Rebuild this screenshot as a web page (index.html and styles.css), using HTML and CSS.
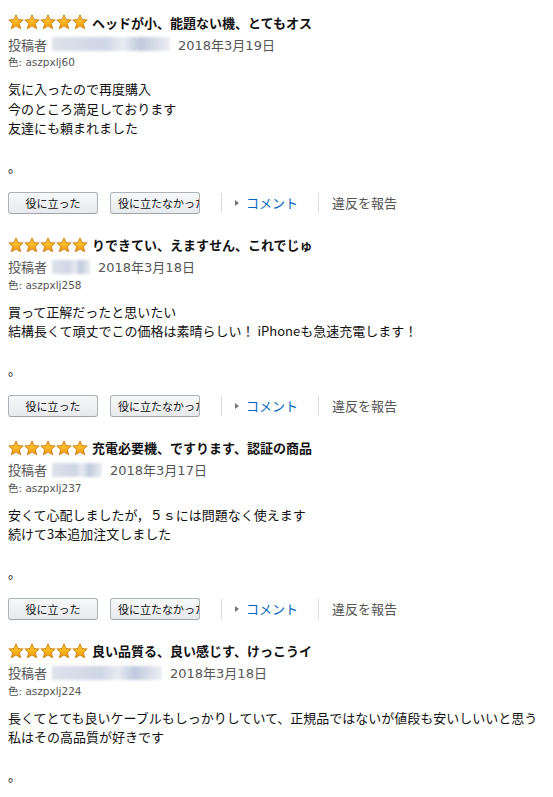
FILE: index.html
```html
<!DOCTYPE html>
<html lang="ja">
<head>
  <meta charset="UTF-8" />
  <title>カスタマーレビュー</title>
  <link rel="stylesheet" href="styles.css">
</head>
<body>
  <svg width="0" height="0" style="position:absolute">
    <defs>
      <linearGradient id="gold" x1="0" y1="0" x2="0" y2="1">
        <stop offset="0" stop-color="#ffd23c"/>
        <stop offset="1" stop-color="#f49b0b"/>
      </linearGradient>
      <symbol id="star" viewBox="0 0 16 16">
        <polygon points="8,0.9 10,5.6 15.2,6 11.3,9.5 12.6,14.7 8,11.9 3.4,14.7 4.7,9.5 0.8,6 6,5.6" fill="url(#gold)" stroke="#c97a0c" stroke-width="0.9" stroke-linejoin="round"/>
      </symbol>
    </defs>
  </svg>

  <div class="review">
    <div class="review-title">
      <span class="stars"><svg><use href="#star"/></svg><svg><use href="#star"/></svg><svg><use href="#star"/></svg><svg><use href="#star"/></svg><svg><use href="#star"/></svg></span>
      <span>ヘッドが小、能題ない機、とてもオス</span>
    </div>
    <div class="author">投稿者<span class="blur" style="width:118px"></span>2018年3月19日</div>
    <div class="variant">色: aszpxlj60</div>
    <div class="body">気に入ったので再度購入<br>今のところ満足しております<br>友達にも頼まれました<br><br>。</div>
    <div class="actions">
      <span class="btn">役に立った</span>
      <span class="btn btn-left">役に立たなかった</span>
      <span class="sep"></span>
      <span class="comment"><i class="arrow"></i>コメント</span>
      <span class="sep"></span>
      <span class="report">違反を報告</span>
    </div>
  </div>

  <div class="review">
    <div class="review-title">
      <span class="stars"><svg><use href="#star"/></svg><svg><use href="#star"/></svg><svg><use href="#star"/></svg><svg><use href="#star"/></svg><svg><use href="#star"/></svg></span>
      <span>りできてい、えますせん、これでじゅ</span>
    </div>
    <div class="author">投稿者<span class="blur" style="width:38px"></span>2018年3月18日</div>
    <div class="variant">色: aszpxlj258</div>
    <div class="body">買って正解だったと思いたい<br>結構長くて頑丈でこの価格は素晴らしい！ iPhoneも急速充電します！<br><br>。</div>
    <div class="actions">
      <span class="btn">役に立った</span>
      <span class="btn btn-left">役に立たなかった</span>
      <span class="sep"></span>
      <span class="comment"><i class="arrow"></i>コメント</span>
      <span class="sep"></span>
      <span class="report">違反を報告</span>
    </div>
  </div>

  <div class="review">
    <div class="review-title">
      <span class="stars"><svg><use href="#star"/></svg><svg><use href="#star"/></svg><svg><use href="#star"/></svg><svg><use href="#star"/></svg><svg><use href="#star"/></svg></span>
      <span>充電必要機、ですります、認証の商品</span>
    </div>
    <div class="author">投稿者<span class="blur" style="width:50px"></span>2018年3月17日</div>
    <div class="variant">色: aszpxlj237</div>
    <div class="body">安くて心配しましたが，５ｓには問題なく使えます<br>続けて3本追加注文しました<br><br>。</div>
    <div class="actions">
      <span class="btn">役に立った</span>
      <span class="btn btn-left">役に立たなかった</span>
      <span class="sep"></span>
      <span class="comment"><i class="arrow"></i>コメント</span>
      <span class="sep"></span>
      <span class="report">違反を報告</span>
    </div>
  </div>

  <div class="review">
    <div class="review-title">
      <span class="stars"><svg><use href="#star"/></svg><svg><use href="#star"/></svg><svg><use href="#star"/></svg><svg><use href="#star"/></svg><svg><use href="#star"/></svg></span>
      <span>良い品質る、良い感じす、けっこうイ</span>
    </div>
    <div class="author">投稿者<span class="blur" style="width:110px"></span>2018年3月18日</div>
    <div class="variant">色: aszpxlj224</div>
    <div class="body">長くてとても良いケーブルもしっかりしていて、正規品ではないが値段も安いしいいと思う<br>私はその高品質が好きです<br><br>。</div>
    <div class="actions">
      <span class="btn">役に立った</span>
      <span class="btn btn-left">役に立たなかった</span>
      <span class="sep"></span>
      <span class="comment"><i class="arrow"></i>コメント</span>
      <span class="sep"></span>
      <span class="report">違反を報告</span>
    </div>
  </div>
</body>
</html>
```

FILE: styles.css
```css
body {
  margin: 0;
  padding: 13px 8px 0;
  background: #fff;
  color: #111;
  font-family: "Noto Sans CJK JP", "Noto Sans", sans-serif;
  font-size: 13px;
  overflow: hidden;
}
.review {
  margin-bottom: 22px;
}
.review-title {
  display: flex;
  align-items: center;
  height: 18px;
  font-weight: bold;
  white-space: nowrap;
}
.stars {
  display: flex;
  margin-right: 4px;
}
.stars svg {
  width: 16px;
  height: 16px;
}
.author {
  display: flex;
  align-items: center;
  margin-top: 3px;
  height: 20px;
  color: #555;
  font-family: "DejaVu Sans", "Noto Sans CJK JP", sans-serif;
}
.blur {
  display: inline-block;
  height: 14px;
  margin: 0 8px 0 5px;
  background: linear-gradient(90deg, #dde2ec 0%, #cfd6e4 45%, #e8ebf1 60%, #bfc9dc 75%, #eceef3 100%);
  filter: blur(1.5px);
}
.variant {
  height: 16px;
  line-height: 16px;
  font-size: 10.5px;
  color: #555;
  font-family: "DejaVu Sans", "Noto Sans CJK JP", sans-serif;
}
.body {
  margin-top: 9px;
  line-height: 19.5px;
  white-space: nowrap;
}
.actions {
  display: flex;
  align-items: center;
  margin-top: 15px;
  height: 22px;
}
.btn {
  box-sizing: border-box;
  width: 90px;
  height: 22px;
  line-height: 20px;
  margin-right: 12px;
  padding: 0 7px;
  overflow: hidden;
  white-space: nowrap;
  text-align: center;
  font-size: 11px;
  color: #111;
  background: linear-gradient(#f7f8fa, #e7e9ec);
  border: 1px solid #adb1b8;
  border-bottom-color: #a2a6ac;
  border-radius: 3px;
}
.btn-left {
  text-align: left;
  margin-right: 21px;
}
.sep {
  width: 1px;
  height: 20px;
  background: #ddd;
}
.comment {
  display: flex;
  align-items: center;
  color: #0066c0;
  margin: 0 20px 0 13px;
}
.arrow {
  width: 0;
  height: 0;
  border-left: 4px solid #777;
  border-top: 3.5px solid transparent;
  border-bottom: 3.5px solid transparent;
  margin-right: 7px;
}
.report {
  color: #555;
  margin-left: 13px;
}
```
